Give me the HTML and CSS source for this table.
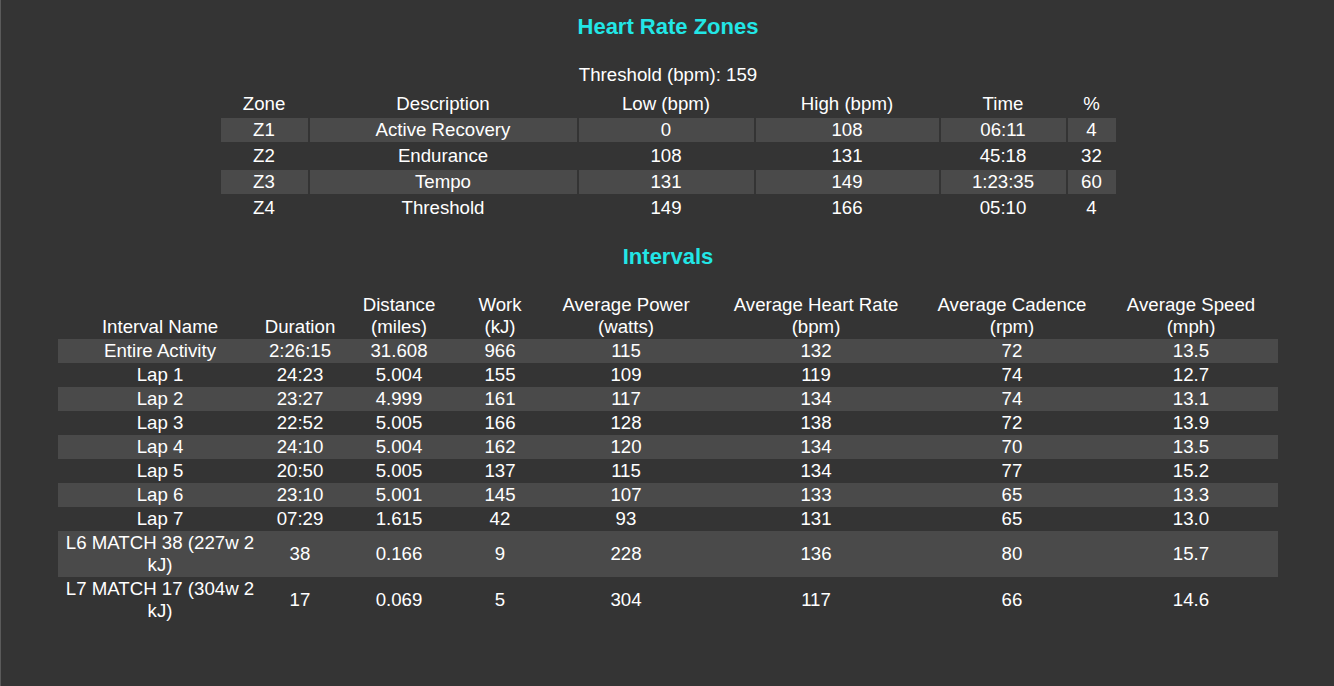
FILE: index.html
```html
<!DOCTYPE html>
<html lang="en">
<head>
<meta charset="utf-8">
<title>Heart Rate Zones</title>
<link rel="stylesheet" href="styles.css">
</head>
<body>
<div class="page">
  <h2 class="section-title first">Heart Rate Zones</h2>
  <div class="threshold">Threshold (bpm): 159</div>
  <table class="zones">
    <colgroup>
      <col class="z-zone"><col class="z-desc"><col class="z-low"><col class="z-high"><col class="z-time"><col class="z-pct">
    </colgroup>
    <thead>
      <tr><th>Zone</th><th>Description</th><th>Low (bpm)</th><th>High (bpm)</th><th>Time</th><th>%</th></tr>
    </thead>
    <tbody>
      <tr class="shade"><td>Z1</td><td>Active Recovery</td><td>0</td><td>108</td><td>06:11</td><td>4</td></tr>
      <tr><td>Z2</td><td>Endurance</td><td>108</td><td>131</td><td>45:18</td><td>32</td></tr>
      <tr class="shade"><td>Z3</td><td>Tempo</td><td>131</td><td>149</td><td>1:23:35</td><td>60</td></tr>
      <tr><td>Z4</td><td>Threshold</td><td>149</td><td>166</td><td>05:10</td><td>4</td></tr>
    </tbody>
  </table>

  <h2 class="section-title second">Intervals</h2>
  <table class="intervals">
    <colgroup>
      <col class="i-name"><col class="i-dur"><col class="i-dist"><col class="i-work"><col class="i-pow"><col class="i-hr"><col class="i-cad"><col class="i-spd">
    </colgroup>
    <thead>
      <tr>
        <th>Interval Name</th><th>Duration</th><th>Distance<br>(miles)</th><th>Work<br>(kJ)</th>
        <th>Average Power<br>(watts)</th><th>Average Heart Rate<br>(bpm)</th><th>Average Cadence<br>(rpm)</th><th>Average Speed<br>(mph)</th>
      </tr>
    </thead>
    <tbody>
      <tr class="shade"><td>Entire Activity</td><td>2:26:15</td><td>31.608</td><td>966</td><td>115</td><td>132</td><td>72</td><td>13.5</td></tr>
      <tr><td>Lap 1</td><td>24:23</td><td>5.004</td><td>155</td><td>109</td><td>119</td><td>74</td><td>12.7</td></tr>
      <tr class="shade"><td>Lap 2</td><td>23:27</td><td>4.999</td><td>161</td><td>117</td><td>134</td><td>74</td><td>13.1</td></tr>
      <tr><td>Lap 3</td><td>22:52</td><td>5.005</td><td>166</td><td>128</td><td>138</td><td>72</td><td>13.9</td></tr>
      <tr class="shade"><td>Lap 4</td><td>24:10</td><td>5.004</td><td>162</td><td>120</td><td>134</td><td>70</td><td>13.5</td></tr>
      <tr><td>Lap 5</td><td>20:50</td><td>5.005</td><td>137</td><td>115</td><td>134</td><td>77</td><td>15.2</td></tr>
      <tr class="shade"><td>Lap 6</td><td>23:10</td><td>5.001</td><td>145</td><td>107</td><td>133</td><td>65</td><td>13.3</td></tr>
      <tr><td>Lap 7</td><td>07:29</td><td>1.615</td><td>42</td><td>93</td><td>131</td><td>65</td><td>13.0</td></tr>
      <tr class="shade"><td>L6 MATCH 38 (227w 2 kJ)</td><td>38</td><td>0.166</td><td>9</td><td>228</td><td>136</td><td>80</td><td>15.7</td></tr>
      <tr><td>L7 MATCH 17 (304w 2 kJ)</td><td>17</td><td>0.069</td><td>5</td><td>304</td><td>117</td><td>66</td><td>14.6</td></tr>
    </tbody>
  </table>
</div>
</body>
</html>
```

FILE: styles.css
```css
html, body {
  margin: 0;
  padding: 0;
  background: #343434;
}

body {
  color: #ffffff;
  font-family: "Liberation Sans", Arial, sans-serif;
  font-size: 14pt;
  min-height: 686px;
  border-left: 1px solid #5a5a5a;
  box-sizing: border-box;
}

.page {
  padding: 0 7px 0 8px;
  overflow: hidden;
}

.section-title {
  color: #22e6e6;
  font-size: 22px;
  font-weight: bold;
  line-height: 26px;
  text-align: center;
  margin: 0;
}

.section-title.first {
  margin-top: 14px;
}

.section-title.second {
  margin-top: 22px;
}

.threshold {
  text-align: center;
  line-height: 22px;
  margin-top: 24px;
}

table {
  table-layout: fixed;
  margin-left: auto;
  margin-right: auto;
  color: #ffffff;
  font-size: 14pt;
}

th, td {
  text-align: center;
  font-weight: normal;
  line-height: 22px;
  padding: 1px 0;
  vertical-align: middle;
}

th {
  vertical-align: bottom;
}

tr.shade td {
  background: #4a4a4a;
}

/* Heart rate zones */
.zones {
  border-spacing: 2px;
  margin-top: 4px;
  width: 899px;
}

.z-zone { width: 87px; }
.z-desc { width: 267px; }
.z-low { width: 175px; }
.z-high { width: 183px; }
.z-time { width: 125px; }
.z-pct { width: 48px; }

/* Intervals */
.intervals {
  border-spacing: 0;
  border-collapse: collapse;
  margin-top: 23px;
  width: 1220px;
}

.i-name { width: 204px; }
.i-dur { width: 76px; }
.i-dist { width: 122px; }
.i-work { width: 80px; }
.i-pow { width: 172px; }
.i-hr { width: 208px; }
.i-cad { width: 184px; }
.i-spd { width: 174px; }
```
